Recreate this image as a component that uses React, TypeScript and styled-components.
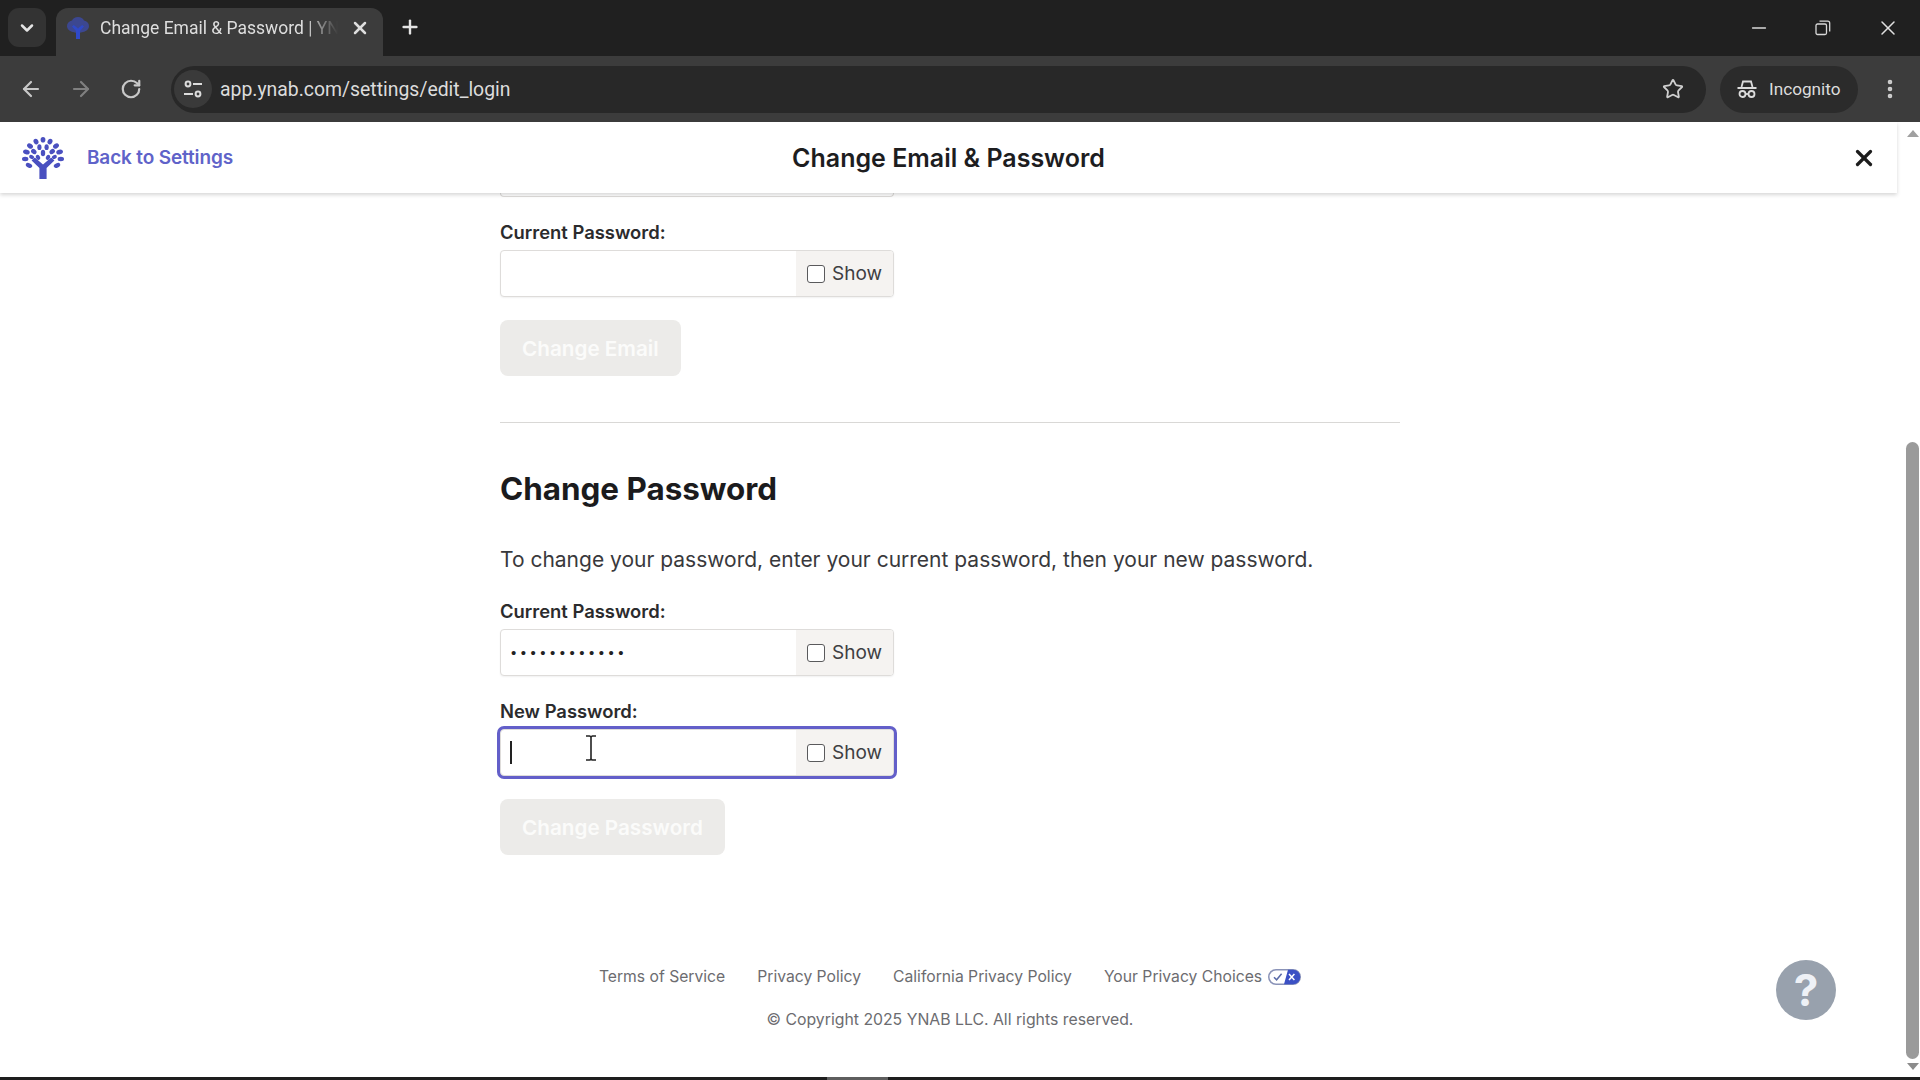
import styled, { createGlobalStyle } from 'styled-components';
import { ArrowLeft, ArrowRight, ChevronDown, EllipsisVertical, Minus, Plus, RotateCw, Star, X } from 'lucide-react';

const GlobalStyle = createGlobalStyle`
  html, body {
    margin: 0;
    height: 100%;
    background: #ffffff;
  }
  * {
    box-sizing: border-box;
  }
`;

const appFont = `Inter, "Liberation Sans", sans-serif`;
const chromeFont = `Roboto, "Liberation Sans", sans-serif`;

const Page = styled.div`
  width: 1920px;
  height: 1080px;
  display: flex;
  flex-direction: column;
  overflow: hidden;
  position: relative;
  font-family: ${appFont};
`;

const TabStrip = styled.div`
  height: 56px;
  flex-shrink: 0;
  background: #202020;
  display: flex;
  align-items: flex-start;
  padding: 8px 0 0 8px;
  color: #e4e4e4;
`;

const TabListButton = styled.div`
  width: 38px;
  height: 39px;
  border-radius: 11px;
  background: #333333;
  display: flex;
  align-items: center;
  justify-content: center;
  margin-right: 10px;
`;

const Tab = styled.div`
  width: 327px;
  height: 48px;
  background: #3c3c3c;
  border-radius: 12px 12px 0 0;
  display: flex;
  align-items: center;
  padding: 0 13px 8px 11px;
  font-family: ${chromeFont};
  font-size: 17.5px;
  color: #dedede;
`;

const TabTitle = styled.span`
  flex: 1;
  margin-left: 11px;
  margin-right: 12px;
  white-space: nowrap;
  overflow: hidden;
  -webkit-mask-image: linear-gradient(90deg, #000 86%, transparent 100%);
  mask-image: linear-gradient(90deg, #000 86%, transparent 100%);
`;

const NewTab = styled.div`
  margin: 8px 0 0 16px;
  display: flex;
`;

const StripSpacer = styled.div`
  flex: 1;
`;

const WindowControls = styled.div`
  display: flex;
  align-items: center;
  gap: 45px;
  padding: 8px 20px 0 0;
`;

const Toolbar = styled.div`
  height: 66px;
  flex-shrink: 0;
  background: #3c3c3c;
  display: flex;
  align-items: center;
  padding: 0 0 0 11px;
  color: #cfcfcf;
`;

const NavButton = styled.div<{ $dim?: boolean }>`
  width: 40px;
  height: 40px;
  margin-right: 10px;
  display: flex;
  align-items: center;
  justify-content: center;
  color: ${(p) => (p.$dim ? '#808080' : '#c8c8c8')};
`;

const Omnibox = styled.div`
  width: 1535px;
  height: 47px;
  margin-left: 10px;
  border-radius: 24px;
  background: #282828;
  display: flex;
  align-items: center;
  padding: 0 22px 0 3px;
`;

const SiteIcon = styled.div`
  width: 38px;
  height: 38px;
  border-radius: 50%;
  background: #3a3a3a;
  display: flex;
  align-items: center;
  justify-content: center;
`;

const Url = styled.span`
  flex: 1;
  margin-left: 8px;
  font-family: ${chromeFont};
  font-size: 19.4px;
  color: #dcdcdc;
`;

const IncognitoPill = styled.div`
  width: 138px;
  height: 47px;
  margin-left: 14px;
  border-radius: 24px;
  background: #2b2b2b;
  display: flex;
  align-items: center;
  gap: 12px;
  padding-left: 17px;
  font-family: ${chromeFont};
  font-size: 17.2px;
  color: #dcdcdc;
`;

const MenuButton = styled.div`
  margin-left: 20px;
  display: flex;
`;

const AppArea = styled.div`
  flex: 1;
  min-height: 0;
  display: flex;
`;

const Main = styled.div`
  flex: 1;
  min-width: 0;
  display: flex;
  flex-direction: column;
`;

const AppHeader = styled.header`
  height: 71px;
  flex-shrink: 0;
  background: #ffffff;
  box-shadow: 0 2px 4px rgba(0, 0, 0, 0.16);
  display: grid;
  grid-template-columns: 1fr auto 1fr;
  align-items: center;
  padding: 0 22px;
  position: relative;
  z-index: 1;
`;

const BackLink = styled.a`
  display: flex;
  align-items: center;
  gap: 23px;
  font-size: 19px;
  letter-spacing: -0.15px;
  font-weight: 600;
  color: #5f63c9;
`;

const HeaderTitle = styled.h1`
  margin: 0;
  font-size: 25px;
  font-weight: 600;
  color: #1d1d1f;
`;

const HeaderClose = styled.div`
  justify-self: end;
  display: flex;
  color: #1c1c1c;
  margin-right: -2px;
`;

const Content = styled.main`
  flex: 1;
  min-height: 0;
  overflow: hidden;
  width: 903px;
  padding-left: 3px;
  margin: 0 auto;
`;

const FieldStub = styled.div`
  width: 394px;
  height: 4px;
  border: 1px solid #dedcda;
  border-top: 0;
  border-radius: 0 0 4px 4px;
`;

const Label = styled.label<{ $top: number }>`
  display: block;
  margin-top: ${(p) => p.$top}px;
  margin-bottom: 6px;
  font-size: 18.4px;
  line-height: 24px;
  font-weight: 600;
  color: #2b2b2d;
`;

const Field = styled.div<{ $focused?: boolean }>`
  width: 394px;
  height: 47px;
  display: flex;
  border: 1px solid #dedcda;
  border-radius: 4px;
  overflow: hidden;
  background: #ffffff;
  box-shadow: ${(p) => (p.$focused ? '0 0 0 3px #635fc9' : '0 1px 2px rgba(0, 0, 0, 0.06)')};
`;

const FieldValue = styled.div`
  flex: 1;
  display: flex;
  align-items: center;
  padding-left: 10px;
  font-family: "Liberation Sans", sans-serif;
  font-size: 15px;
  letter-spacing: 4.5px;
  color: #222222;
`;

const Caret = styled.span`
  width: 2px;
  height: 23px;
  margin-left: -1px;
  background: #222222;
`;

const ShowCell = styled.div`
  width: 97px;
  background: #f5f3f1;
  display: flex;
  align-items: center;
  gap: 7px;
  padding-left: 11px;
  font-size: 19px;
  color: #3e3e42;
`;

const CheckBox = styled.span`
  width: 18px;
  height: 18px;
  margin-top: 1px;
  border: 1.5px solid #5a5a5c;
  border-radius: 3px;
  background: #ffffff;
`;

const SubmitButton = styled.button`
  display: block;
  height: 56px;
  margin-top: 23px;
  padding: 0 22px;
  border: 0;
  border-radius: 8px;
  background: #ecebe9;
  color: #fbfbfa;
  font-family: ${appFont};
  font-size: 20.7px;
  font-weight: 600;
`;

const Divider = styled.hr`
  margin: 46px 0 0;
  border: 0;
  height: 1px;
  background: #d9d8d6;
`;

const SectionTitle = styled.h2`
  margin: 44px 0 0;
  font-size: 31.4px;
  line-height: 44px;
  font-weight: 700;
  color: #1b1b1d;
`;

const Description = styled.p`
  margin: 34px 0 0;
  font-size: 21px;
  line-height: 30px;
  color: #39393c;
`;

const FooterLinks = styled.nav`
  margin-top: 110px;
  display: flex;
  justify-content: center;
  align-items: center;
  gap: 32px;
  font-size: 15.7px;
  line-height: 24px;
  color: #6c6c70;
`;

const PrivacyChoice = styled.span`
  display: flex;
  align-items: center;
  gap: 6px;
`;

const Copyright = styled.p`
  margin: 19px 0 0;
  text-align: center;
  font-size: 15.8px;
  line-height: 24px;
  color: #6c6c70;
`;

const Scrollbar = styled.div`
  width: 23px;
  flex-shrink: 0;
  display: flex;
  flex-direction: column;
  align-items: center;
  padding: 8px 0 7px 8px;
  background: #ffffff;
`;

const ScrollArrow = styled.span<{ $down?: boolean }>`
  width: 0;
  height: 0;
  border-left: 6px solid transparent;
  border-right: 6px solid transparent;
  ${(p) => (p.$down ? 'border-top: 7px solid #8c8c8c;' : 'border-bottom: 7px solid #a0a0a0;')}
`;

const ScrollTrack = styled.div`
  flex: 1;
  width: 13px;
  padding: 305px 0 4px;
  display: flex;
`;

const ScrollThumb = styled.div`
  flex: 1;
  border-radius: 7px;
  background: #9a9a9a;
`;

const BottomEdge = styled.div`
  height: 3px;
  flex-shrink: 0;
  background: #1e1e1e;
  display: flex;
  padding-left: 827px;
`;

const BottomEdgeMark = styled.div`
  width: 61px;
  background: #5e5e5e;
`;

const HelpButton = styled.div`
  position: absolute;
  left: 1776px;
  top: 960px;
  width: 60px;
  height: 60px;
  border-radius: 50%;
  background: #98a1ad;
  color: #eef1f6;
  display: flex;
  align-items: center;
  justify-content: center;
  font-size: 44px;
  font-weight: 700;
`;

const MouseCursor = styled.svg`
  position: absolute;
  left: 584px;
  top: 735px;
`;

const YnabTree = ({ size }: { size: number }) => (
  <svg width={size} height={size} viewBox="0 0 42 42" fill="#4a50c0">
    <path d="M17.4 42V31L9.6 23.4l3.2-2.8L21 27.4l8.2-6.8 3.2 2.8L24.6 31v11z" />
    <ellipse cx="21" cy="2.8" rx="2.4" ry="2.8" />
    <ellipse cx="14" cy="4.6" rx="2.4" ry="2.9" transform="rotate(-25 14 4.6)" />
    <ellipse cx="28" cy="4.6" rx="2.4" ry="2.9" transform="rotate(25 28 4.6)" />
    <ellipse cx="8" cy="9" rx="3.2" ry="2.3" transform="rotate(35 8 9)" />
    <ellipse cx="34" cy="9" rx="3.2" ry="2.3" transform="rotate(-35 34 9)" />
    <ellipse cx="17.4" cy="10.2" rx="2.1" ry="2.9" />
    <ellipse cx="24.6" cy="10.2" rx="2.1" ry="2.9" />
    <ellipse cx="4.4" cy="15" rx="3.4" ry="2.4" transform="rotate(15 4.4 15)" />
    <ellipse cx="37.6" cy="15" rx="3.4" ry="2.4" transform="rotate(-15 37.6 15)" />
    <ellipse cx="11.8" cy="14.6" rx="3" ry="2.3" transform="rotate(40 11.8 14.6)" />
    <ellipse cx="30.2" cy="14.6" rx="3" ry="2.3" transform="rotate(-40 30.2 14.6)" />
    <ellipse cx="21" cy="16" rx="2.2" ry="3.2" />
    <ellipse cx="3.2" cy="22" rx="3.2" ry="2.2" />
    <ellipse cx="38.8" cy="22" rx="3.2" ry="2.2" />
    <ellipse cx="9.6" cy="20" rx="2.6" ry="1.9" transform="rotate(25 9.6 20)" />
    <ellipse cx="32.4" cy="20" rx="2.6" ry="1.9" transform="rotate(-25 32.4 20)" />
    <ellipse cx="16" cy="20.4" rx="2" ry="2.7" transform="rotate(-25 16 20.4)" />
    <ellipse cx="26" cy="20.4" rx="2" ry="2.7" transform="rotate(25 26 20.4)" />
    <ellipse cx="7" cy="28.4" rx="3.4" ry="2.2" transform="rotate(25 7 28.4)" />
    <ellipse cx="35" cy="28.4" rx="3.4" ry="2.2" transform="rotate(-25 35 28.4)" />
  </svg>
);

const Favicon = () => (
  <svg width="22" height="24" viewBox="0 0 22 24">
    <path d="M11 1C8 1 6 2.5 5 4.5 2 5 0 7.2 0 10c0 3.4 3 5.4 6 6l3 .8L11 12l2 4.8 3-.8c3-.6 6-2.6 6-6 0-2.8-2-5-5-5.5C16 2.500 14 1 11 1z" fill="#3c4790" />
    <path d="M9 23v-8L5 10.500l1.800-1.500L11 12.500 15.200 9l1.800 1.500L13 15v8z" fill="#2f49c8" />
  </svg>
);

const TuneIcon = () => (
  <svg width="20" height="20" viewBox="0 0 20 20" fill="none" stroke="#dcdcdc" strokeWidth="2">
    <circle cx="5" cy="5" r="2.4" />
    <path d="M10 5h9" />
    <circle cx="15" cy="15" r="2.4" />
    <path d="M1 15h9" />
  </svg>
);

const IncognitoIcon = () => (
  <svg width="20" height="20" viewBox="0 0 20 20" fill="none" stroke="#dcdcdc" strokeWidth="1.8">
    <path d="M4.5 8 6 2.5h8L15.5 8" />
    <path d="M0.5 9h19" strokeWidth="2" />
    <circle cx="5.5" cy="15" r="3" />
    <circle cx="14.500" cy="15" r="3" />
    <path d="M8.500 15h3" />
  </svg>
);

const RestoreIcon = () => (
  <svg width="16" height="16" viewBox="0 0 16 16" fill="none" stroke="#d8d8d8" strokeWidth="1.3">
    <rect x="1" y="4" width="10.5" height="10.5" rx="1.5" />
    <path d="M4.5 1.2h8.2a2 2 0 0 1 2 2v8.2" />
  </svg>
);

const PrivacyIcon = () => (
  <svg width="33" height="16" viewBox="0 0 33 16">
    <rect x="0.75" y="0.75" width="31.5" height="14.5" rx="7.25" fill="#ffffff" stroke="#8a93b8" strokeWidth="1.5" />
    <path d="M20 0.75h5a7.25 7.25 0 0 1 0 14.500h-9z" fill="#3b50c4" />
    <path d="M6 8.200l2.600 2.600L13.600 4.800" fill="none" stroke="#5a6ba8" strokeWidth="1.5" />
    <path d="M21 5l5.400 6M26.400 5L21 11" stroke="#ffffff" strokeWidth="1.5" />
  </svg>
);

const PasswordField = ({ value, focused }: { value?: string; focused?: boolean }) => (
  <Field $focused={focused}>
    <FieldValue>{focused ? <Caret /> : value}</FieldValue>
    <ShowCell>
      <CheckBox />
      Show
    </ShowCell>
  </Field>
);

const App = () => {
  return (
    <Page>
      <GlobalStyle />
      <TabStrip>
        <TabListButton>
          <ChevronDown size={20} strokeWidth={3} />
        </TabListButton>
        <Tab>
          <Favicon />
          <TabTitle>Change Email &amp; Password | YNAB</TabTitle>
          <X size={20} strokeWidth={3} />
        </Tab>
        <NewTab>
          <Plus size={22} strokeWidth={2.6} />
        </NewTab>
        <StripSpacer />
        <WindowControls>
          <Minus size={22} strokeWidth={1.5} color="#d8d8d8" />
          <RestoreIcon />
          <X size={24} strokeWidth={1.5} color="#e0e0e0" />
        </WindowControls>
      </TabStrip>

      <Toolbar>
        <NavButton>
          <ArrowLeft size={24} strokeWidth={2.2} />
        </NavButton>
        <NavButton $dim>
          <ArrowRight size={24} strokeWidth={2.2} />
        </NavButton>
        <NavButton>
          <RotateCw size={22} strokeWidth={2.4} />
        </NavButton>
        <Omnibox>
          <SiteIcon>
            <TuneIcon />
          </SiteIcon>
          <Url>app.ynab.com/settings/edit_login</Url>
          <Star size={22} strokeWidth={2} color="#cfcfcf" />
        </Omnibox>
        <IncognitoPill>
          <IncognitoIcon />
          Incognito
        </IncognitoPill>
        <MenuButton>
          <EllipsisVertical size={24} strokeWidth={2.6} />
        </MenuButton>
      </Toolbar>

      <AppArea>
        <Main>
          <AppHeader>
            <BackLink>
              <YnabTree size={42} />
              Back to Settings
            </BackLink>
            <HeaderTitle>Change Email &amp; Password</HeaderTitle>
            <HeaderClose>
              <X size={26} strokeWidth={3} />
            </HeaderClose>
          </AppHeader>
          <Content>
            <FieldStub />
            <Label $top={23}>Current Password:</Label>
            <PasswordField />
            <SubmitButton disabled>Change Email</SubmitButton>
            <Divider />
            <SectionTitle>Change Password</SectionTitle>
            <Description>To change your password, enter your current password, then your new password.</Description>
            <Label $top={24}>Current Password:</Label>
            <PasswordField value="••••••••••••" />
            <Label $top={23}>New Password:</Label>
            <PasswordField focused />
            <SubmitButton disabled>Change Password</SubmitButton>
            <FooterLinks>
              <span>Terms of Service</span>
              <span>Privacy Policy</span>
              <span>California Privacy Policy</span>
              <PrivacyChoice>
                Your Privacy Choices
                <PrivacyIcon />
              </PrivacyChoice>
            </FooterLinks>
            <Copyright>© Copyright 2025 YNAB LLC. All rights reserved.</Copyright>
          </Content>
        </Main>
        <Scrollbar>
          <ScrollArrow />
          <ScrollTrack>
            <ScrollThumb />
          </ScrollTrack>
          <ScrollArrow $down />
        </Scrollbar>
      </AppArea>
      <BottomEdge>
        <BottomEdgeMark />
      </BottomEdge>

      <HelpButton>?</HelpButton>
      <MouseCursor width="14" height="26" viewBox="0 0 14 26" fill="none" stroke="#222222" strokeWidth="1.6">
        <path d="M2 1h3.500a2 2 0 0 1 1.500 1 2 2 0 0 1 1.500-1H12M7 2v22M2 25h3.500a2 2 0 0 0 1.500-1 2 2 0 0 0 1.500 1H12" />
      </MouseCursor>
    </Page>
  );
};

export default App;
